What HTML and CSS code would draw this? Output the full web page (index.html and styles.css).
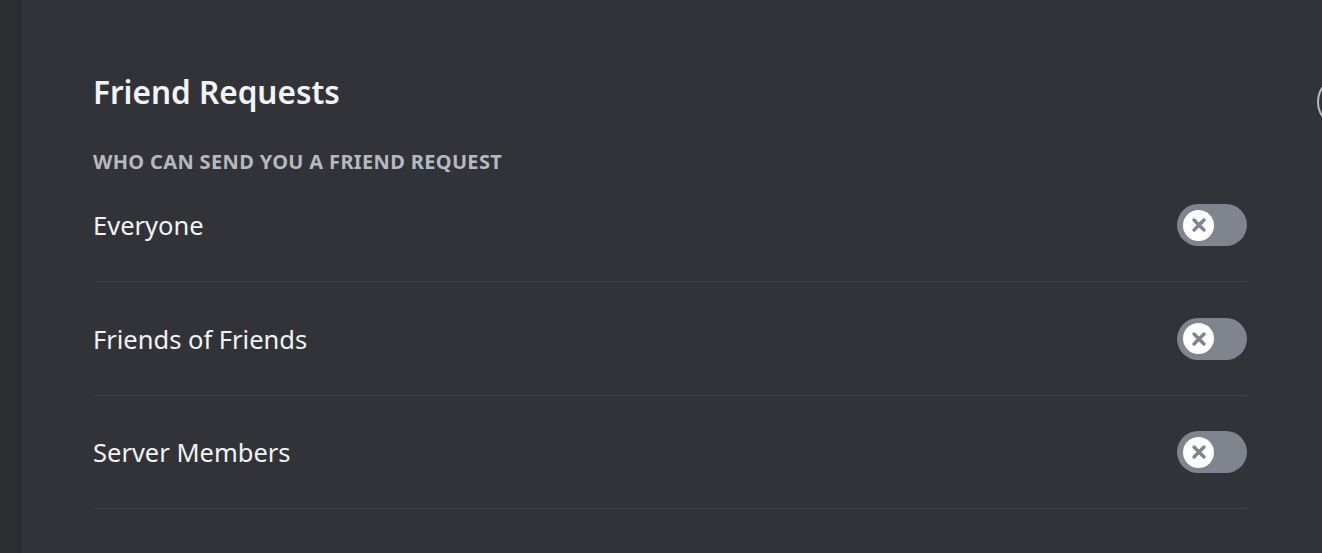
FILE: index.html
```html
<!DOCTYPE html>
<html lang="en">
<head>
    <meta charset="UTF-8">
    <meta name="viewport" content="width=device-width, initial-scale=1.0">
    <title>Friend Requests</title>
<link rel="stylesheet" href="styles.css">
</head>
<body>
    <div class="sidebar"></div>

    <div class="content">
        <h2 class="title">Friend Requests</h2>
        <div class="label">Who can send you a friend request</div>

        <div class="row">
            <div class="row-text">Everyone</div>
            <div class="toggle">
                <div class="knob">
                    <svg width="18" height="18" viewBox="0 0 18 18"><path d="M4 4L14 14M14 4L4 14" stroke="#80848e" stroke-width="3.4" stroke-linecap="round"/></svg>
                </div>
            </div>
        </div>

        <div class="row">
            <div class="row-text">Friends of Friends</div>
            <div class="toggle">
                <div class="knob">
                    <svg width="18" height="18" viewBox="0 0 18 18"><path d="M4 4L14 14M14 4L4 14" stroke="#80848e" stroke-width="3.4" stroke-linecap="round"/></svg>
                </div>
            </div>
        </div>

        <div class="row">
            <div class="row-text">Server Members</div>
            <div class="toggle">
                <div class="knob">
                    <svg width="18" height="18" viewBox="0 0 18 18"><path d="M4 4L14 14M14 4L4 14" stroke="#80848e" stroke-width="3.4" stroke-linecap="round"/></svg>
                </div>
            </div>
        </div>
    </div>

    <div class="close"></div>
</body>
</html>
```

FILE: styles.css
```css
body {
margin: 0;
height: 553px;
overflow: hidden;
background-color: #313338;
display: flex;
font-family: "Noto Sans", "Open Sans", sans-serif;
}

.sidebar {
width: 22px;
background-color: #2b2d31;
}

.content {
flex: 1;
padding: 74px 75px 0 71px;
}

.title {
margin: 0;
font-size: 31.5px;
line-height: 36px;
font-weight: 600;
color: #f2f3f5;
}

.label {
margin-top: 40px;
margin-bottom: 30px;
font-size: 20px;
line-height: 24px;
font-weight: 700;
letter-spacing: 0.35px;
text-transform: uppercase;
color: #b5bac1;
}

.row {
display: flex;
justify-content: space-between;
align-items: center;
padding-bottom: 35px;
margin-bottom: 35.5px;
border-bottom: solid 1px #3f4147;
}

.row-text {
font-size: 25.5px;
line-height: 30px;
color: #f2f3f5;
}

.toggle {
width: 70px;
height: 42px;
border-radius: 21px;
background-color: #80848e;
display: flex;
align-items: center;
padding-left: 6px;
box-sizing: border-box;
}

.knob {
width: 31px;
height: 31px;
border-radius: 50%;
background-color: #ffffff;
display: flex;
justify-content: center;
align-items: center;
}

.close {
position: absolute;
left: 1317px;
top: 76px;
width: 48px;
height: 48px;
border: solid 2px #b5bac1;
border-radius: 50%;
}
```
